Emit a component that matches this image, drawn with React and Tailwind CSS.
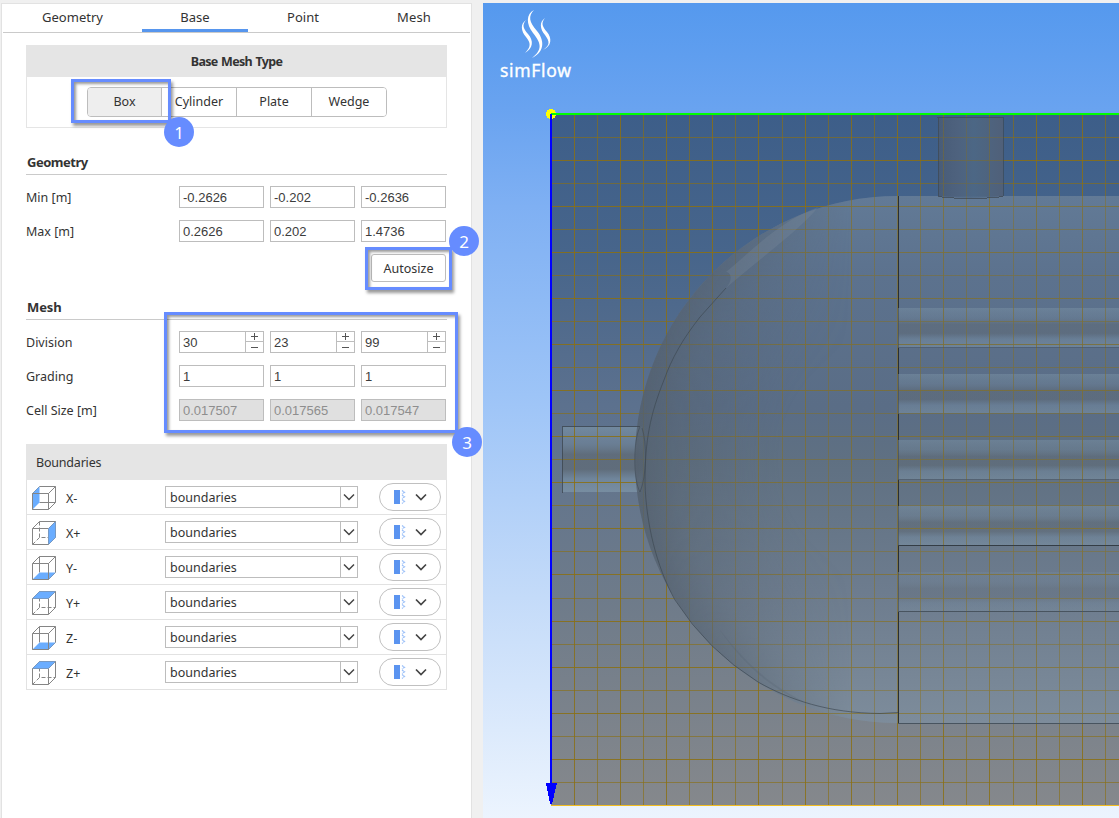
const cols = [574,597,620,643,666,689,712,735,758,782,805,828,851,874,897,920,943,966,989,1013,1036,1059,1082,1105];
const rows = [137,160,183,206,229,252,275,298,321,344,367,390,413,436,459,482,505,528,551,574,598,621,644,667,690,713,736,759,782];

function Field({ value, disabled }) {
  return (
    <div className={'flex h-[22px] w-[85px] items-center border border-[#bdbdbd] pl-[3px] text-[13px] leading-none [font-family:"Liberation_Sans",Arial,sans-serif] ' + (disabled ? 'bg-[#e0e0e0] text-[#8e8e8e]' : 'bg-white text-[#3c3c3c]')}>{value}</div>
  );
}

function Spin({ value }) {
  return (
    <div className='flex h-[22px] w-[85px] border border-[#bdbdbd] bg-white text-[13px] leading-none text-[#3c3c3c] [font-family:"Liberation_Sans",Arial,sans-serif]'>
      <div className="flex flex-1 items-center pl-[3px]">{value}</div>
      <svg width="18" height="20" className="border-l border-[#bdbdbd]" shapeRendering="crispEdges">
        <path d="M0 9.5H18" stroke="#bdbdbd" />
        <path d="M5 4.5H12M8.5 1V8M5 15.5H12" stroke="#555" />
      </svg>
    </div>
  );
}

function Row({ label, children, className }) {
  return (
    <div className={'flex h-[22px] items-center justify-between pr-px ' + className}>
      <span className="pt-[2px] text-[12.5px]">{label}</span>
      <div className="flex gap-[6px]">{children}</div>
    </div>
  );
}

const faces = {
  l: 'M.5 7.5L7.5.5V16.5L.5 23.5Z',
  r: 'M16.5 7.5L23.5.5V16.5L16.5 23.5Z',
  b: 'M.5 23.5L7.5 16.5H23.5L16.5 23.5Z',
  t: 'M.5 7.5L7.5.5H23.5L16.5 7.5Z',
};

function Cube({ face }) {
  const open = face === 'l' || face === 'b';
  return (
    <svg width="24" height="24" fill="none" className="relative top-px shrink-0">
      <g stroke="#858585">
        <path d="M.5 7.5H16.5V23.5H.5ZM7.5.5H23.5V16.5M.5 7.5L7.5.5M16.5 7.5L23.5.5M16.5 23.5L23.5 16.5" />
        {open ? <path d={face === 'l' ? 'M7.5 16.5H23.5' : 'M7.5.5V16.5'} /> : <path d="M7.5 .5V16.5H23.5M7.5 16.5L.5 23.5" strokeDasharray="4 2" />}
      </g>
      <path d={faces[face]} fill="#6aadff" />
      {face === 'b' && <path d="M.5 23.5H16.5V7.5" stroke="#858585" />}
      {face === 'l' && <path d="M.5 7.5V23.5M.5 7.5H16.5" stroke="#858585" />}
    </svg>
  );
}

function Boundary({ name, face }) {
  return (
    <div className="flex h-[35px] items-center border-x border-b border-[#e2e2e2] pl-[5px]">
      <Cube face={face} />
      <span className="w-[99px] pl-[10px] pt-[4px] text-[12.5px]">{name}</span>
      <div className="ml-[10px] flex h-[22px] w-[193px] items-center border border-[#bdbdbd]">
        <span className="flex-1 pl-[4px] pt-[2px] text-[12.5px]">boundaries</span>
        <svg width="17" height="20" className="border-l border-[#bdbdbd]" fill="none"><path d="M3 7.5L8 12.5L13 7.5" stroke="#444" strokeWidth="1.500" /></svg>
      </div>
      <div className="ml-[21px] flex h-[28px] w-[62px] items-center rounded-full border border-[#c0c0c0]">
        <svg width="60" height="26" fill="none">
          <path d="M14 6h6v14h-6z" fill="#5b94f0" />
          <path d="M22 6.5l2.5 1.8L22 10M22 11l2.5 1.8L22 14.500M22 15.500l2.500 1.800L22 19.500" stroke="#9cc0f8" strokeWidth="1.300" strokeDasharray="2 .7" />
          <path d="M36 10.500L41 15.500L46 10.500" stroke="#444" strokeWidth="1.700" />
        </svg>
      </div>
    </div>
  );
}

function Scene() {
  return (
    <svg width="636" height="815" viewBox="483 3 636 815" className="block">
      <defs>
        <linearGradient id="sky" gradientUnits="userSpaceOnUse" x1="0" x2="0" y1="3" y2="818">
          <stop offset="0" stopColor="#5599ee" /><stop offset=".13" stopColor="#69a3f0" /><stop offset=".25" stopColor="#7fb0f3" /><stop offset=".48" stopColor="#9dc4f7" /><stop offset=".73" stopColor="#c4dbf9" /><stop offset="1" stopColor="#ecf4fe" />
        </linearGradient>
        <linearGradient id="plane" gradientUnits="userSpaceOnUse" x1="0" x2="0" y1="115" y2="805">
          <stop offset="0" stopColor="#3d5e89" /><stop offset=".2" stopColor="#47658b" /><stop offset=".42" stopColor="#5c718e" /><stop offset=".7" stopColor="#6e7b8a" /><stop offset="1" stopColor="#85888c" />
        </linearGradient>
        <linearGradient id="shell" gradientUnits="userSpaceOnUse" x1="0" x2="0" y1="196" y2="723">
          <stop offset="0" stopColor="#627a96" /><stop offset=".15" stopColor="#5c728e" /><stop offset=".4" stopColor="#5a6d86" /><stop offset=".5" stopColor="#5f7082" /><stop offset=".75" stopColor="#6d7c8e" /><stop offset="1" stopColor="#7d8c9b" />
        </linearGradient>
        <radialGradient id="rim" gradientUnits="userSpaceOnUse" cx="898" cy="459" r="263">
          <stop offset=".45" stopColor="#535f6c" stopOpacity="0" /><stop offset=".85" stopColor="#535f6c" stopOpacity=".5" /><stop offset="1" stopColor="#535f6c" stopOpacity=".9" />
        </radialGradient>
        <linearGradient id="rimFade" gradientUnits="userSpaceOnUse" x1="635" x2="850" y1="0" y2="0">
          <stop offset="0" stopColor="#fff" /><stop offset=".45" stopColor="#aaa" /><stop offset="1" stopColor="#000" />
        </linearGradient>
        <mask id="left" maskUnits="userSpaceOnUse" x="630" y="190" width="270" height="540"><rect x="630" y="190" width="270" height="540" fill="url(#rimFade)" /></mask>
        <linearGradient id="tube" x1="0" x2="0" y1="0" y2="1">
          <stop offset="0" stopColor="#7890a4" stopOpacity=".75" /><stop offset=".25" stopColor="#71869a" stopOpacity=".6" /><stop offset=".42" stopColor="#5f6b77" stopOpacity=".8" /><stop offset=".65" stopColor="#5f6b77" stopOpacity=".8" /><stop offset=".8" stopColor="#748ba1" stopOpacity=".75" /><stop offset="1" stopColor="#7c93a6" stopOpacity=".8" />
        </linearGradient>
        <linearGradient id="nozzle" x1="0" x2="1" y1="0" y2="0">
          <stop offset="0" stopColor="#485c78" /><stop offset=".3" stopColor="#4e627e" /><stop offset=".55" stopColor="#4c6785" /><stop offset="1" stopColor="#506079" />
        </linearGradient>
      </defs>
      <path d="M483 3H1119V818H483z" fill="url(#sky)" />
      <path d="M551 115H1119V805H551z" fill="url(#plane)" />
      <path d="M1119 196H898A263 263.500 0 0 0 898 723H1119z" fill="url(#shell)" />
      <path d="M938 117H1003V196Q970 200 938 196z" fill="url(#nozzle)" />
      <path d="M562 427H642Q646 459 640 492H562z" fill="url(#tube)" />
      {[308, 374, 440, 506, 572].map((y) => <rect key={y} x="898" y={y} width="221" height="39" fill="url(#tube)" opacity={y === 572 ? 0.5 : 1} />)}
      <g shapeRendering="crispEdges">
        {cols.map((x, i) => <path key={x} d={`M${x}.5 115V805`} stroke="#8b7013" opacity={i % 2 ? 0.62 : 0.82} />)}
        {rows.map((y, i) => <path key={y} d={`M551 ${y}.5H1119`} stroke="#8b7013" opacity={i % 2 ? 0.85 : 0.62} />)}
      </g>
      <path d="M1119 196H898A263 263.500 0 0 0 898 723H1119z" fill="url(#shell)" opacity=".3" />
      <g mask="url(#left)"><path d="M898 196A263 263.500 0 0 0 898 723z" fill="url(#rim)" opacity=".85" /></g>
      <path d="M726 272C757 246 779 222 818 207C804 226 765 255 726 288C735 277 729 272 726 272z" fill="#8797a6" opacity=".22" />
      <path d="M720 630C740 655 763 682 805 702C781 695 745 668 720 630z" fill="#52606c" opacity=".22" />
      <path d="M939 117H1003V197H939z" fill="url(#nozzle)" opacity=".5" />
      <g fill="none" stroke="#3c4650">
        <path d="M726 288L700 317C682 340 672 358 664 380C650 415 645 440 645 483C646 522 656 566 675 600A263 263.500 0 0 0 758 682C790 700 828 713 880 713.500L898 712.500" opacity=".65" />
        <path d="M642 428C647 442 647 476 640 492C633 480 633 440 640 427" opacity=".5" />
        <g shapeRendering="crispEdges">
          <path d="M898.500 196V723" opacity=".55" />
          <path d="M898.500 196V308M898.500 348V374M898.500 414V440M898.500 480V506M898.500 545V572M898.500 611V723" stroke="#292e34" />
          <path d="M898 545.500H1119" stroke="#343d46" />
          <path d="M898 611.500H1119M898 723.500H1119" stroke="#48545f" />
          <path d="M898 347.500H1119M898 479.500H1119" opacity=".35" />
          <path d="M562.500 427V493M562 426.500H640" opacity=".8" />
          <path d="M937 117.500H1003.500V196M938.500 118V196" opacity=".65" />
          <path d="M938 196.500H942M942 197.500H954M954 198.500H987M987 197.500H999M999 196.500H1003" opacity=".7" />
        </g>
      </g>
      <g shapeRendering="crispEdges">
        <path d="M551 805.500H1119" stroke="#f2bd20" />
        <circle cx="551" cy="114" r="5" fill="#ff0" />
        <path d="M551 114H1119" stroke="#0f0" strokeWidth="2" />
        <path d="M551 114V800" stroke="#00f" strokeWidth="2" />
        <path d="M546 783H557L552 804H550z" fill="#00f" />
      </g>
      <g fill="#fff">
        <path d="M534 10C526 14 526 24 533 33C542 44 542 50 532 58C543 53 546 42 537 31C529 22 528 16 534 10z" />
        <path d="M526 20C520 24 521 31 526 37C531 43 531 47 525 53C533 48 534 41 528 34C523 28 522 25 526 20z" />
        <path d="M545 18C539 22 540 29 545 35C550 42 550 45 543 50C552 46 552 38 547 32C542 26 541 23 545 18z" />
        <text x="500" y="77" fontFamily="Noto Sans, sans-serif" fontSize="17.500" stroke="#fff" strokeWidth=".35" textLength="71">simFlow</text>
      </g>
    </svg>
  );
}

export default function App() {
  const frame = 'absolute border-[3px] border-[#668cff] [box-shadow:2px_3px_3px_#0006,inset_2px_2px_3px_#0006] ';
  const badge = 'absolute flex size-[30px] items-center justify-center rounded-full bg-[#668cff] text-[17px] leading-none text-white ';
  return (
    <div className='relative flex h-[818px] w-[1119px] overflow-hidden bg-[#f0f0f0] pt-[3px] text-[12.5px] leading-none text-[#333] [font-family:"Noto_Sans","Open_Sans",sans-serif]'>
      <main className="ml-px h-[815px] w-[471px] shrink-0 border-x border-t border-[#e2e2e2] bg-white">
        <nav className="mx-px -mt-px flex h-[30px] border-b border-[#cacaca] text-[13px]">
          <div className="w-[139px] pt-[8px] text-center">Geometry</div>
          <div className="w-[106px] border-b-[3px] border-[#5796ee] pt-[8px] text-center">Base</div>
          <div className="w-[110px] pt-[8px] text-center">Point</div>
          <div className="flex-1 pt-[8px] text-center tracking-[.2px]">Mesh</div>
        </nav>
        <div className="ml-[24px] mt-[12px] w-[421px]">
          <section className="h-[83px] border border-[#e5e5e5]">
            <h2 className="-mt-px flex h-[32px] items-center justify-center bg-[#e5e5e5] pt-[2px] text-[12.5px] font-bold tracking-[-.7px] [word-spacing:1px]">Base Mesh Type</h2>
            <div className="ml-[60px] mt-[10px] grid h-[30px] w-[300px] grid-cols-[74px_75px_75px_74px] divide-x divide-[#bdbdbd] overflow-hidden rounded-[4px] border border-[#bdbdbd]">
              {['Box', 'Cylinder', 'Plate', 'Wedge'].map((t, i) => <div key={t} className={'flex items-center justify-center ' + (i ? 'bg-white' : 'bg-[#eee]')}>{t}</div>)}
            </div>
          </section>
          <h3 className="mt-[24px] flex h-[23px] items-center border-b border-[#cacaca] pb-px pl-px text-[13px] font-bold tracking-[-.5px]">Geometry</h3>
          <Row label="Min [m]" className="mt-[11px]"><Field value="-0.2626" /><Field value="-0.202" /><Field value="-0.2636" /></Row>
          <Row label="Max [m]" className="mt-[12px]"><Field value="0.2626" /><Field value="0.202" /><Field value="1.4736" /></Row>
          <div className="ml-auto mr-px mt-[12px] flex h-[28px] w-[75px] items-center justify-center rounded-[3px] border border-[#bdbdbd] pt-[2px]">Autosize</div>
          <h3 className="mt-[14px] flex h-[24px] items-center border-b border-[#cacaca] pl-px text-[13px] font-bold tracking-[-.1px]">Mesh</h3>
          <Row label="Division" className="mt-[11px]"><Spin value="30" /><Spin value="23" /><Spin value="99" /></Row>
          <Row label="Grading" className="mt-[12px]"><Field value="1" /><Field value="1" /><Field value="1" /></Row>
          <Row label="Cell Size [m]" className="mt-[12px]"><Field disabled value="0.017507" /><Field disabled value="0.017565" /><Field disabled value="0.017547" /></Row>
          <section className="mt-[23px]">
            <h2 className="flex h-[36px] items-center bg-[#e5e5e5] pl-[10px] pt-[2px] tracking-[-.2px]">Boundaries</h2>
            {[['X-', 'l'], ['X+', 'r'], ['Y-', 'b'], ['Y+', 't'], ['Z-', 'b'], ['Z+', 't']].map(([n, f]) => <Boundary key={n} name={n} face={f} />)}
          </section>
        </div>
      </main>
      <div className="ml-[11px] shrink-0"><Scene /></div>
      <div className={frame + 'left-[71px] top-[79px] h-[44px] w-[100px]'} />
      <div className={frame + 'left-[365px] top-[247px] h-[43px] w-[87px]'} />
      <div className={frame + 'left-[164px] top-[312px] h-[121px] w-[294px]'} />
      <div className={badge + 'left-[164px] top-[117px]'}>1</div>
      <div className={badge + 'left-[449px] top-[226px]'}>2</div>
      <div className={badge + 'left-[452px] top-[427px]'}>3</div>
    </div>
  );
}
